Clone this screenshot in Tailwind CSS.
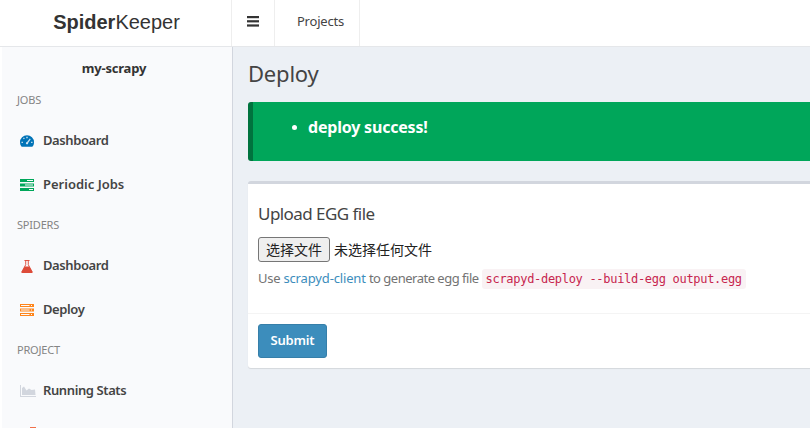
<!DOCTYPE html>
<html lang="en">
<head>
  <meta charset="UTF-8">
  <title>SpiderKeeper</title>
  <script src="https://cdn.jsdelivr.net/npm/@tailwindcss/browser@4"></script>
</head>
<body class="h-[428px] w-[810px] overflow-hidden bg-[#ecf0f5] font-['Noto_Sans','Noto_Sans_CJK_SC',sans-serif] text-[14px] text-[#333]">
  <!-- top bar -->
  <header class="flex h-[47px] border-b border-[#e5e7ea] bg-white">
    <a class="flex w-[232px] items-center justify-center border-r border-[#eeeeee] pb-[3px] pl-[2px] font-['Liberation_Sans',sans-serif] text-[20px] text-[#333]"><b>Spider</b><span class="font-light">Keeper</span></a>
    <div class="flex w-[43px] items-center justify-center border-r border-[#eeeeee] pb-[3px]">
      <svg width="12" height="11" viewBox="0 0 12 11" fill="#333"><rect y="0" width="12" height="2.2"/><rect y="4.2" width="12" height="2.2"/><rect y="8.4" width="12" height="2.2"/></svg>
    </div>
    <div class="flex w-[85px] items-center justify-center border-r border-[#eeeeee] pb-[3px] pl-[7px] text-[13px] tracking-[-0.2px] text-[#444]">Projects</div>
  </header>

  <div class="flex h-[381px]">
    <!-- sidebar -->
    <aside class="h-full w-[233px] shrink-0 overflow-hidden border-r border-[#d2d6de] bg-white pl-[2px]">
      <div class="h-full bg-[#f9fafc]">
        <div class="pt-[11px] pr-[6px] text-center text-[13px] leading-[20px] font-bold tracking-[-0.2px] text-[#333]">my-scrapy</div>
        <div class="mt-[4px] px-[15px] pt-[9px] pb-[11px] text-[11px] leading-[17px] tracking-[-0.2px] text-[#848484]">JOBS</div>
        <a class="flex h-[44px] items-center pl-[18px] text-[13px] font-semibold tracking-[-0.4px] text-[#444]">
          <svg class="mr-[9px] w-[14px]" width="14" height="12" viewBox="0 0 14 12"><path fill="#0073b7" d="M7 .2A7 7 0 0 0 0 7.200c0 1.600.4 3 1.200 4.100.2.2.4.4.7.4h10.200c.3 0 .5-.2.7-.4.8-1.100 1.200-2.500 1.200-4.100A7 7 0 0 0 7 .2z"/><path fill="#cfe2f0" d="M6.300 1.800h1.400v1.400H6.300zM3 3.200l1-.8.8 1-1 .8zM1.500 6.800h1.400v1.300H1.500zM11.100 6.800h1.400v1.300h-1.400zM9.800 3.600l.9.6-2.600 3.700c.2.700-.2 1.300-.9 1.400-.8.100-1.400-.5-1.300-1.300.1-.6.600-1 1.200-1.100z"/></svg>
          Dashboard
        </a>
        <a class="flex h-[44px] items-center pl-[18px] text-[13px] font-semibold tracking-[0px] text-[#444]">
          <svg class="mr-[9px] w-[14px]" width="14" height="12" viewBox="0 0 14 12"><path fill="#00a65a" d="M0 0h14v3H0zM0 4.500h14v3H0zM0 9h14v3H0z"/><path fill="#f9fafc" d="M7 1h6v1H7zM5 5.500h8v1H5zM9 10h4v1H9z"/></svg>
          Periodic Jobs
        </a>
        <div class="px-[15px] pt-[9px] pb-[11px] text-[11px] leading-[17px] tracking-[-0.2px] text-[#848484]">SPIDERS</div>
        <a class="flex h-[44px] items-center pl-[19px] text-[13px] font-semibold tracking-[-0.4px] text-[#444]">
          <svg class="mr-[10px]" width="12" height="13" viewBox="0 0 14 13" preserveAspectRatio="none"><path fill="none" stroke="#dd4b39" d="M4 .5h6M5.500 .5v4.200L1 12M8.500 .5v4.200L13 12"/><path fill="#dd4b39" d="M4.300 6.500h5.400l3.800 5.600c.2.400 0 .9-.5.900H1c-.5 0-.7-.5-.5-.9z"/></svg>
          Dashboard
        </a>
        <a class="flex h-[44px] items-center pl-[18px] text-[13px] font-semibold tracking-[-0.4px] text-[#444]">
          <svg class="mr-[9px] w-[14px]" width="14" height="12" viewBox="0 0 14 12"><path fill="#ff851b" d="M0 0h14v3H0zM0 4.500h14v3H0zM0 9h14v3H0z"/><path fill="#f9fafc" d="M1 1h8.500v1H1zM1 5.500h8.500v1H1zM1 10h8.500v1H1zM11 1h1v1h-1zM11 5.500h1v1h-1zM11 10h1v1h-1z"/></svg>
          Deploy
        </a>
        <div class="px-[15px] pt-[9px] pb-[11px] text-[11px] leading-[17px] tracking-[-0.2px] text-[#848484]">PROJECT</div>
        <a class="flex h-[44px] items-center pl-[18px] text-[13px] font-semibold tracking-[-0.4px] text-[#444]">
          <svg class="mr-[7px] w-[16px]" width="16" height="12" viewBox="0 0 16 12"><path fill="#d2d6de" d="M0 0h1v11h15v1H0z"/><path fill="#d2d6de" d="M2 10V3l2-1.500 2.500 4L9 3.500l2.500 1.500L15 4.500 15.500 10z"/></svg>
          Running Stats
        </a>
        <div class="flex h-[44px] items-center pb-[3px] pl-[24px]">
          <svg width="14" height="13" viewBox="0 0 14 13"><path fill="none" stroke="#f0704a" stroke-width="2" d="M4 1h6M5.500 1v4L1 12M8.500 1v4L13 12"/></svg>
        </div>
      </div>
    </aside>

    <!-- content -->
    <main class="min-w-0 flex-1 pl-[15px]">
      <h1 class="pt-[10px] text-[22px] leading-[32px] tracking-[-0.2px] text-[#444]">Deploy</h1>
      <div class="mt-[13px] h-[59px] w-[600px] rounded-[3px] border-l-[5px] border-[#00733e] bg-[#00a65a] pt-[15px] pl-[39px] text-[16px] leading-[20px] font-bold tracking-[-0.2px] text-white">
        <ul><li class="flex items-center gap-[11px]"><span class="h-[5px] w-[5px] rounded-full bg-white"></span>deploy success!</li></ul>
      </div>
      <section class="mt-[20px] h-[187px] w-[600px] rounded-[3px] border-t-[3px] border-[#d2d6de] bg-white shadow-[0_1px_1px_rgba(0,0,0,0.1)]">
        <div class="h-[130px] border-b border-[#f4f4f4] px-[10px] pt-[20px]">
          <h3 class="text-[17px] leading-[20px] tracking-[-0.55px] text-[#444]">Upload EGG file</h3>
          <div class="mt-[13px] flex h-[25px] items-center font-['Noto_Sans_CJK_SC',sans-serif] text-[14px] text-[#222]">
            <button class="h-[25px] w-[72px] rounded-[3px] border border-[#767676] bg-[#efefef]">选择文件</button>
            <span class="ml-[4px]">未选择任何文件</span>
          </div>
          <div class="mt-[7px] flex h-[20px] items-center text-[13px] tracking-[-0.25px] whitespace-nowrap text-[#737373]">
            Use&nbsp;<a class="tracking-[-0.15px] text-[#3c8dbc]">scrapyd-client</a>&nbsp;<span class="tracking-[-0.5px]">to generate egg file</span>
            <code class="ml-[3px] rounded-[3px] bg-[#f9f2f4] px-[4px] py-[2px] font-['DejaVu_Sans_Mono',monospace] text-[12px] leading-[16px] tracking-[-0.3px] text-[#c7254e]">scrapyd-deploy --build-egg output.egg</code>
          </div>
        </div>
        <div class="px-[10px] pt-[10px]">
          <button class="h-[34px] w-[69px] rounded-[3px] border border-[#367fa9] bg-[#3c8dbc] text-[13px] font-semibold tracking-[-0.2px] text-white">Submit</button>
        </div>
      </section>
    </main>
  </div>
</body>
</html>
